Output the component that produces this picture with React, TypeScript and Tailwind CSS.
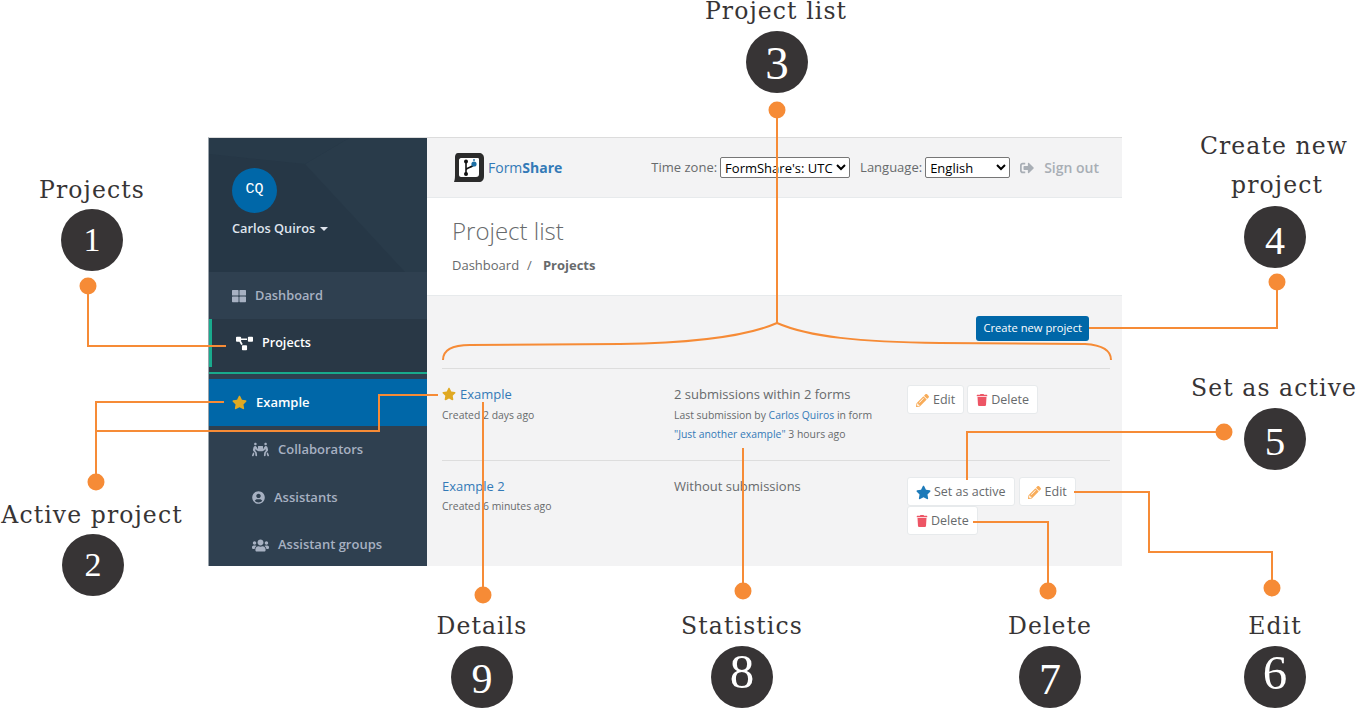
import {
  FaPencilAlt,
  FaPeopleCarry,
  FaProjectDiagram,
  FaSignOutAlt,
  FaStar,
  FaThLarge,
  FaTrash,
  FaUserCircle,
  FaUsers,
} from "react-icons/fa";

// digits in the picture are old-style, so each one gets its own size and drop
const callouts = [
  { n: "1", x: 92, y: 240, digit: "text-[34px]" },
  { n: "2", x: 93, y: 565, digit: "text-[34px]" },
  { n: "3", x: 777, y: 62, digit: "text-[47px] translate-y-[1px]" },
  { n: "4", x: 1275, y: 237, digit: "text-[40px] translate-y-[4px]" },
  { n: "5", x: 1275, y: 439, digit: "text-[41px] translate-y-[2px]" },
  { n: "6", x: 1275, y: 677, digit: "text-[49px] -translate-y-[5px]" },
  { n: "7", x: 1050, y: 677, digit: "text-[44px] translate-y-[3px]" },
  { n: "8", x: 742, y: 677, digit: "text-[49px] -translate-y-[6px]" },
  { n: "9", x: 482, y: 677, digit: "text-[42px] translate-y-[2px]" },
];

const labels = [
  { text: "Projects", x: 92, y: 190 },
  { text: "Active project", x: 92, y: 515 },
  { text: "Project list", x: 776, y: 11 },
  { text: "Create new", x: 1274, y: 146 },
  { text: "project", x: 1277, y: 185 },
  { text: "Set as active", x: 1274, y: 388 },
  { text: "Details", x: 482, y: 626 },
  { text: "Statistics", x: 742, y: 626 },
  { text: "Delete", x: 1050, y: 626 },
  { text: "Edit", x: 1275, y: 626 },
];

const wires = [
  "M88 286V346H226",
  "M96 482V402H224",
  "M96 431H379V395H438",
  "M777 110V324",
  "M443 360C443 350 452 345 470 345L620 344C690 343 745 337 777 323C809 337 860 342 940 343L1085 344C1102 345 1111 350 1111 360",
  "M1277 282V328H1089",
  "M1224 432H967V480",
  "M1272 588V552H1149V492H1074",
  "M1048 591V522H973",
  "M743 591V448",
  "M483 595V402",
];

const dots = [
  [88, 286],
  [96, 482],
  [777, 110],
  [1277, 282],
  [1224, 432],
  [1272, 588],
  [1048, 591],
  [743, 591],
  [483, 595],
];

function Logo() {
  return (
    <svg width="30" height="30" viewBox="0 0 30 30">
      <path d="M4 0H25C28 0 30 2 30 5V23C30 27 28 29 25 29H0C1 26 1 24 1 20V4C1 2 2 0 4 0Z" fill="#2b2b2b" />
      <path d="M7 5H24C25 5 25 6 25 7V21C25 23 24 24 22 24H7C6 24 5 23 5 22V7C5 6 6 5 7 5Z" fill="#fff" />
      <path d="M12 9V21M12 17C12 14 19 15 20 11" fill="none" stroke="#111" strokeWidth="1.6" />
      <circle cx="12" cy="8.5" r="2" fill="#111" />
      <circle cx="12" cy="21" r="2" fill="#111" />
      <circle cx="20" cy="11" r="2.6" fill="#1c6ea4" />
      <path d="M20 6V8" stroke="#1c6ea4" strokeWidth="1.4" />
    </svg>
  );
}

function Button({ icon, label, gap = "gap-[4px]" }: { icon: React.ReactNode; label: string; gap?: string }) {
  return (
    <button className={`flex h-[29px] items-center ${gap} rounded-[3px] border border-[#e7eaec] bg-white px-[8px] pt-[1px] text-[12.5px] text-[#676a6c]`}>
      {icon}
      {label}
    </button>
  );
}

const pencil = <FaPencilAlt className="text-[13px] text-[#f8ac59]" />;
const trash = <FaTrash className="text-[12px] text-[#ed5565]" />;

function Sidebar() {
  const sub = "flex items-center text-[13px] font-semibold text-[#a7b1c2]";
  return (
    <aside className="flex h-full w-[218px] shrink-0 flex-col bg-[#2f4050] [font-family:'Open_Sans',sans-serif]">
      <div className="relative h-[134px] shrink-0 overflow-hidden bg-[#263746] pl-[23px] pt-[30px]">
        <svg className="absolute inset-0" width="218" height="134" viewBox="0 0 218 134">
          <path d="M96 26L140 0H218V134H196Z" fill="#293b4a" />
          <path d="M0 0H140L96 26L0 16Z" fill="#283a49" />
        </svg>
        <div className="relative flex h-[45px] w-[45px] items-center justify-center rounded-full bg-[#0067a8] text-[15px] text-white [font-family:'Liberation_Mono',monospace]">
          CQ
        </div>
        <div className="relative mt-[6px] flex items-center gap-[5px] text-[12.8px] font-semibold leading-[18px] text-[#dfe4ed]">
          Carlos Quiros
          <span className="mt-[2px] h-0 w-0 border-x-[4px] border-t-[4px] border-x-transparent border-t-[#dfe4ed]" />
        </div>
      </div>

      <div className="flex h-[47px] shrink-0 items-center pl-[23px] pt-[1px] text-[12.8px] font-semibold text-[#a7b1c2]">
        <FaThLarge className="mr-[9px] text-[14px]" />
        Dashboard
      </div>

      <div className="h-[55px] shrink-0 border-b-2 border-[#19aa8d] bg-[#293846]">
        <div className="flex h-[48px] items-center border-l-[3px] border-[#19aa8d] pl-[24px] text-[12.6px] font-semibold text-white">
          <FaProjectDiagram className="mr-[9px] text-[17px]" />
          Projects
        </div>
      </div>

      <div className="mt-[5px] flex h-[47px] shrink-0 items-center bg-[#0067a8] pl-[23px] text-[13px] font-semibold text-white">
        <FaStar className="mr-[9px] text-[15px] text-[#e0a922]" />
        Example
      </div>

      <div className={`${sub} h-[47px] shrink-0 pl-[43px]`}>
        <FaPeopleCarry className="mr-[9px] text-[17px]" />
        Collaborators
      </div>
      <div className={`${sub} h-[49px] shrink-0 pl-[43px]`}>
        <FaUserCircle className="mr-[9px] text-[13px]" />
        Assistants
      </div>
      <div className={`${sub} h-[45px] shrink-0 pl-[43px] pt-[1px]`}>
        <FaUsers className="mr-[9px] text-[17px]" />
        Assistant groups
      </div>
    </aside>
  );
}

function TopBar() {
  return (
    <header className="flex h-[60px] shrink-0 items-center justify-between border-b border-[#e7eaec] bg-[#f3f3f4] pl-[27px] pr-[23px] text-[13px]">
      <div className="flex items-center gap-[4px] text-[14px] text-[#337ab7]">
        <Logo />
        <span>
          Form<b className="font-bold">Share</b>
        </span>
      </div>
      <div className="flex items-center text-[#676a6c]">
        <span className="mr-[3px]">Time zone:</span>
        <select className="mr-[10px] h-[21px] w-[130px] rounded-[2px] border border-[#767676] bg-white text-[13px] text-black">
          <option>FormShare's: UTC</option>
        </select>
        <span className="mr-[3px]">Language:</span>
        <select className="mr-[10px] h-[21px] w-[85px] rounded-[2px] border border-[#767676] bg-white text-[13px] text-black">
          <option>English</option>
        </select>
        <FaSignOutAlt className="mr-[10px] text-[14px] text-[#a8aeb5]" />
        <span className="text-[14px] font-semibold text-[#a8aeb5]">Sign out</span>
      </div>
    </header>
  );
}

function ProjectRows() {
  return (
    <div className="mx-[15px] w-[668px] text-[#676a6c]">
      <div className="flex h-[92px] border-t border-[#dddddd] pt-[16px]">
        <div className="w-[232px]">
          <div className="flex items-center gap-[4px] text-[13px] leading-[18px] text-[#337ab7]">
            <FaStar className="text-[14px] text-[#e0a922]" />
            Example
          </div>
          <p className="mt-[3px] text-[10.4px] leading-[18px]">Created 2 days ago</p>
        </div>
        <div className="w-[233px]">
          <p className="text-[13px] leading-[18px]">2 submissions within 2 forms</p>
          <p className="mt-[3px] text-[10.4px] leading-[18px]">
            Last submission by <span className="text-[#337ab7]">Carlos Quiros</span> in form
          </p>
          <p className="mt-[1px] text-[10.4px] leading-[18px]">
            <span className="text-[#337ab7]">"Just another example"</span> 3 hours ago
          </p>
        </div>
        <div className="flex items-start gap-[3px]">
          <Button icon={pencil} label="Edit" />
          <Button icon={trash} label="Delete" gap="gap-[3px]" />
        </div>
      </div>
      <div className="flex h-[105px] border-t border-[#dddddd] pt-[16px]">
        <div className="w-[232px]">
          <p className="text-[13px] leading-[18px] text-[#337ab7]">Example 2</p>
          <p className="mt-[2px] text-[10.4px] leading-[18px]">Created 6 minutes ago</p>
        </div>
        <div className="w-[233px]">
          <p className="text-[13px] leading-[18px]">Without submissions</p>
        </div>
        <div className="w-[180px]">
          <div className="flex gap-[4px]">
            <Button icon={<FaStar className="text-[15px] text-[#1c7ab9]" />} label="Set as active" gap="gap-[3px]" />
            <Button icon={pencil} label="Edit" />
          </div>
          <div className="flex">
            <Button icon={trash} label="Delete" gap="gap-[3px]" />
          </div>
        </div>
      </div>
    </div>
  );
}

function AppWindow() {
  return (
    <div className="absolute left-[208px] top-[137px] flex h-[429px] w-[914px] border-l border-t border-l-[#9aa3ab] border-t-[#dcdcdc]">
      <Sidebar />
      <main className="flex min-w-0 flex-1 flex-col bg-[#f3f3f4] [font-family:'Open_Sans',sans-serif]">
        <TopBar />
        <section className="h-[98px] shrink-0 border-b border-[#e7eaec] bg-white pl-[25px] pt-[16px] text-[#676a6c]">
          <h1 className="text-[24px] font-light leading-[33px]">Project list</h1>
          <div className="mt-[9px] flex text-[13px] leading-[18px]">
            Dashboard<span className="mx-[8px]">/</span>
            <b className="ml-[3px] font-bold">Projects</b>
          </div>
        </section>
        <div className="flex h-[52px] shrink-0 justify-end pr-[33px] pt-[20px]">
          <button className="h-[25px] rounded-[3px] bg-[#0067a8] px-[7px] text-[11.2px] text-white">
            Create new project
          </button>
        </div>
        <div className="pt-[20px]">
          <ProjectRows />
        </div>
      </main>
    </div>
  );
}

export default function App() {
  return (
    <div className="relative h-[709px] w-[1357px] overflow-hidden bg-white">
      <AppWindow />

      <svg className="pointer-events-none absolute inset-0" width="1357" height="709" viewBox="0 0 1357 709">
        {wires.map((d) => (
          <path key={d} d={d} fill="none" stroke="#f68b36" strokeWidth="2" />
        ))}
        {dots.map(([cx, cy]) => (
          <circle key={`${cx}-${cy}`} cx={cx} cy={cy} r="8.5" fill="#f68b36" />
        ))}
      </svg>

      {labels.map((l) => (
        <div
          key={l.text}
          className="absolute -translate-x-1/2 -translate-y-1/2 whitespace-nowrap text-[23.5px] leading-[20px] tracking-[1.1px] text-[#373435] [font-family:'DejaVu_Serif',serif]"
          style={{ left: l.x, top: l.y }}
        >
          {l.text}
        </div>
      ))}

      {callouts.map((c) => (
        <div
          key={c.n}
          className="absolute flex h-[62px] w-[62px] -translate-x-1/2 -translate-y-1/2 items-center justify-center rounded-full bg-[#373435] text-white [font-family:'Liberation_Serif',serif]"
          style={{ left: c.x, top: c.y }}
        >
          <span className={`leading-none ${c.digit}`}>{c.n}</span>
        </div>
      ))}
    </div>
  );
}
